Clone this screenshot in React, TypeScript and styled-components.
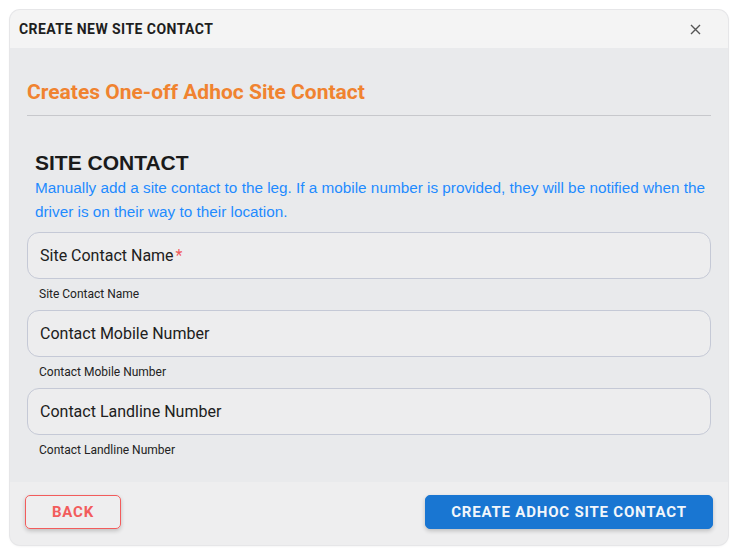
import React from "react"
import styled, { createGlobalStyle } from "styled-components"

const GlobalStyle = createGlobalStyle`
  html, body {
    margin: 0;
    padding: 0;
    background: #ffffff;
    font-family: Roboto, "Liberation Sans", sans-serif;
  }
`

const Page = styled.div`
  padding: 10px 14px 13px 10px;
`

const Dialog = styled.div`
  display: flex;
  flex-direction: column;
  width: 718px;
  border-radius: 10px;
  overflow: hidden;
  background: #e9eaec;
  box-shadow: 0 0 0 1px #e6e6e8, 0 1px 3px rgba(0, 0, 0, 0.08);
`

const Header = styled.div`
  display: flex;
  align-items: center;
  justify-content: space-between;
  height: 38px;
  padding: 0 25px 0 9px;
  background: #f4f4f4;
`

const HeaderTitle = styled.div`
  font-size: 14px;
  font-weight: 700;
  color: #1e1e1e;
  letter-spacing: 0.45px;
`

const CloseBtn = styled.button`
  display: flex;
  align-items: center;
  justify-content: center;
  width: 16px;
  height: 16px;
  padding: 0;
  border: none;
  background: none;
  cursor: pointer;
`

const Body = styled.div`
  display: flex;
  flex-direction: column;
  padding: 31px 17px 25px 17px;
`

const SubTitle = styled.div`
  font-size: 21px;
  font-weight: 700;
  color: #f08330;
  line-height: 26px;
  padding-bottom: 10px;
  border-bottom: 1px solid #c7c8cc;
`

const Section = styled.div`
  display: flex;
  flex-direction: column;
  padding: 35px 0 8px 8px;
`

const SectionTitle = styled.div`
  font-family: "Liberation Sans", Arial, sans-serif;
  font-size: 21px;
  font-weight: 700;
  color: #1a1a1a;
  line-height: 24px;
`

const Description = styled.div`
  font-family: "Liberation Sans", Arial, sans-serif;
  font-size: 15.3px;
  color: #1f8bff;
  line-height: 24px;
  margin-top: 1px;
`

const Fields = styled.div`
  display: flex;
  flex-direction: column;
  gap: 9px;
`

const Field = styled.div`
  display: flex;
  flex-direction: column;
`

const InputBox = styled.div`
  display: flex;
  align-items: center;
  height: 47px;
  box-sizing: border-box;
  padding: 0 12px;
  border: 1px solid #c5c9d6;
  border-radius: 12px;
  background: #ededee;
  font-size: 16px;
  color: #202020;
`

const Star = styled.span`
  color: #f05a5a;
  margin-left: 2px;
`

const Helper = styled.div`
  font-size: 12px;
  color: #222;
  padding: 8px 0 0 12px;
  line-height: 14px;
`

const Footer = styled.div`
  display: flex;
  align-items: flex-start;
  justify-content: space-between;
  height: 63px;
  box-sizing: border-box;
  padding: 13px 15px 0 15px;
  background: #eeeeef;
`

const Button = styled.button<{ $primary?: boolean }>`
  height: 34px;
  box-sizing: border-box;
  border-radius: 5px;
  font-family: Roboto, sans-serif;
  font-size: 15px;
  font-weight: 700;
  letter-spacing: 0.8px;
  cursor: pointer;
  box-shadow: 0 2px 4px rgba(0, 0, 0, 0.2);
  border: 1px solid ${(p) => (p.$primary ? "#1976d2" : "#f25c5c")};
  background: ${(p) => (p.$primary ? "#1976d2" : "transparent")};
  color: ${(p) => (p.$primary ? "#f2f6fb" : "#f25c5c")};
  width: ${(p) => (p.$primary ? "288px" : "96px")};
`

export default function App() {
  return (
    <>
      <GlobalStyle />
      <Page>
        <Dialog>
          <Header>
            <HeaderTitle>CREATE NEW SITE CONTACT</HeaderTitle>
            <CloseBtn>
              <svg width="11" height="11" viewBox="0 0 11 11">
                <path d="M1 1L10 10M10 1L1 10" stroke="#555" strokeWidth="1.4" />
              </svg>
            </CloseBtn>
          </Header>
          <Body>
            <SubTitle>Creates One-off Adhoc Site Contact</SubTitle>
            <Section>
              <SectionTitle>SITE CONTACT</SectionTitle>
              <Description>
                Manually add a site contact to the leg. If a mobile number is provided, they will be notified when the
                driver is on their way to their location.
              </Description>
            </Section>
            <Fields>
              <Field>
                <InputBox>
                  Site Contact Name<Star>*</Star>
                </InputBox>
                <Helper>Site Contact Name</Helper>
              </Field>
              <Field>
                <InputBox>Contact Mobile Number</InputBox>
                <Helper>Contact Mobile Number</Helper>
              </Field>
              <Field>
                <InputBox>Contact Landline Number</InputBox>
                <Helper>Contact Landline Number</Helper>
              </Field>
            </Fields>
          </Body>
          <Footer>
            <Button>BACK</Button>
            <Button $primary>CREATE ADHOC SITE CONTACT</Button>
          </Footer>
        </Dialog>
      </Page>
    </>
  )
}
